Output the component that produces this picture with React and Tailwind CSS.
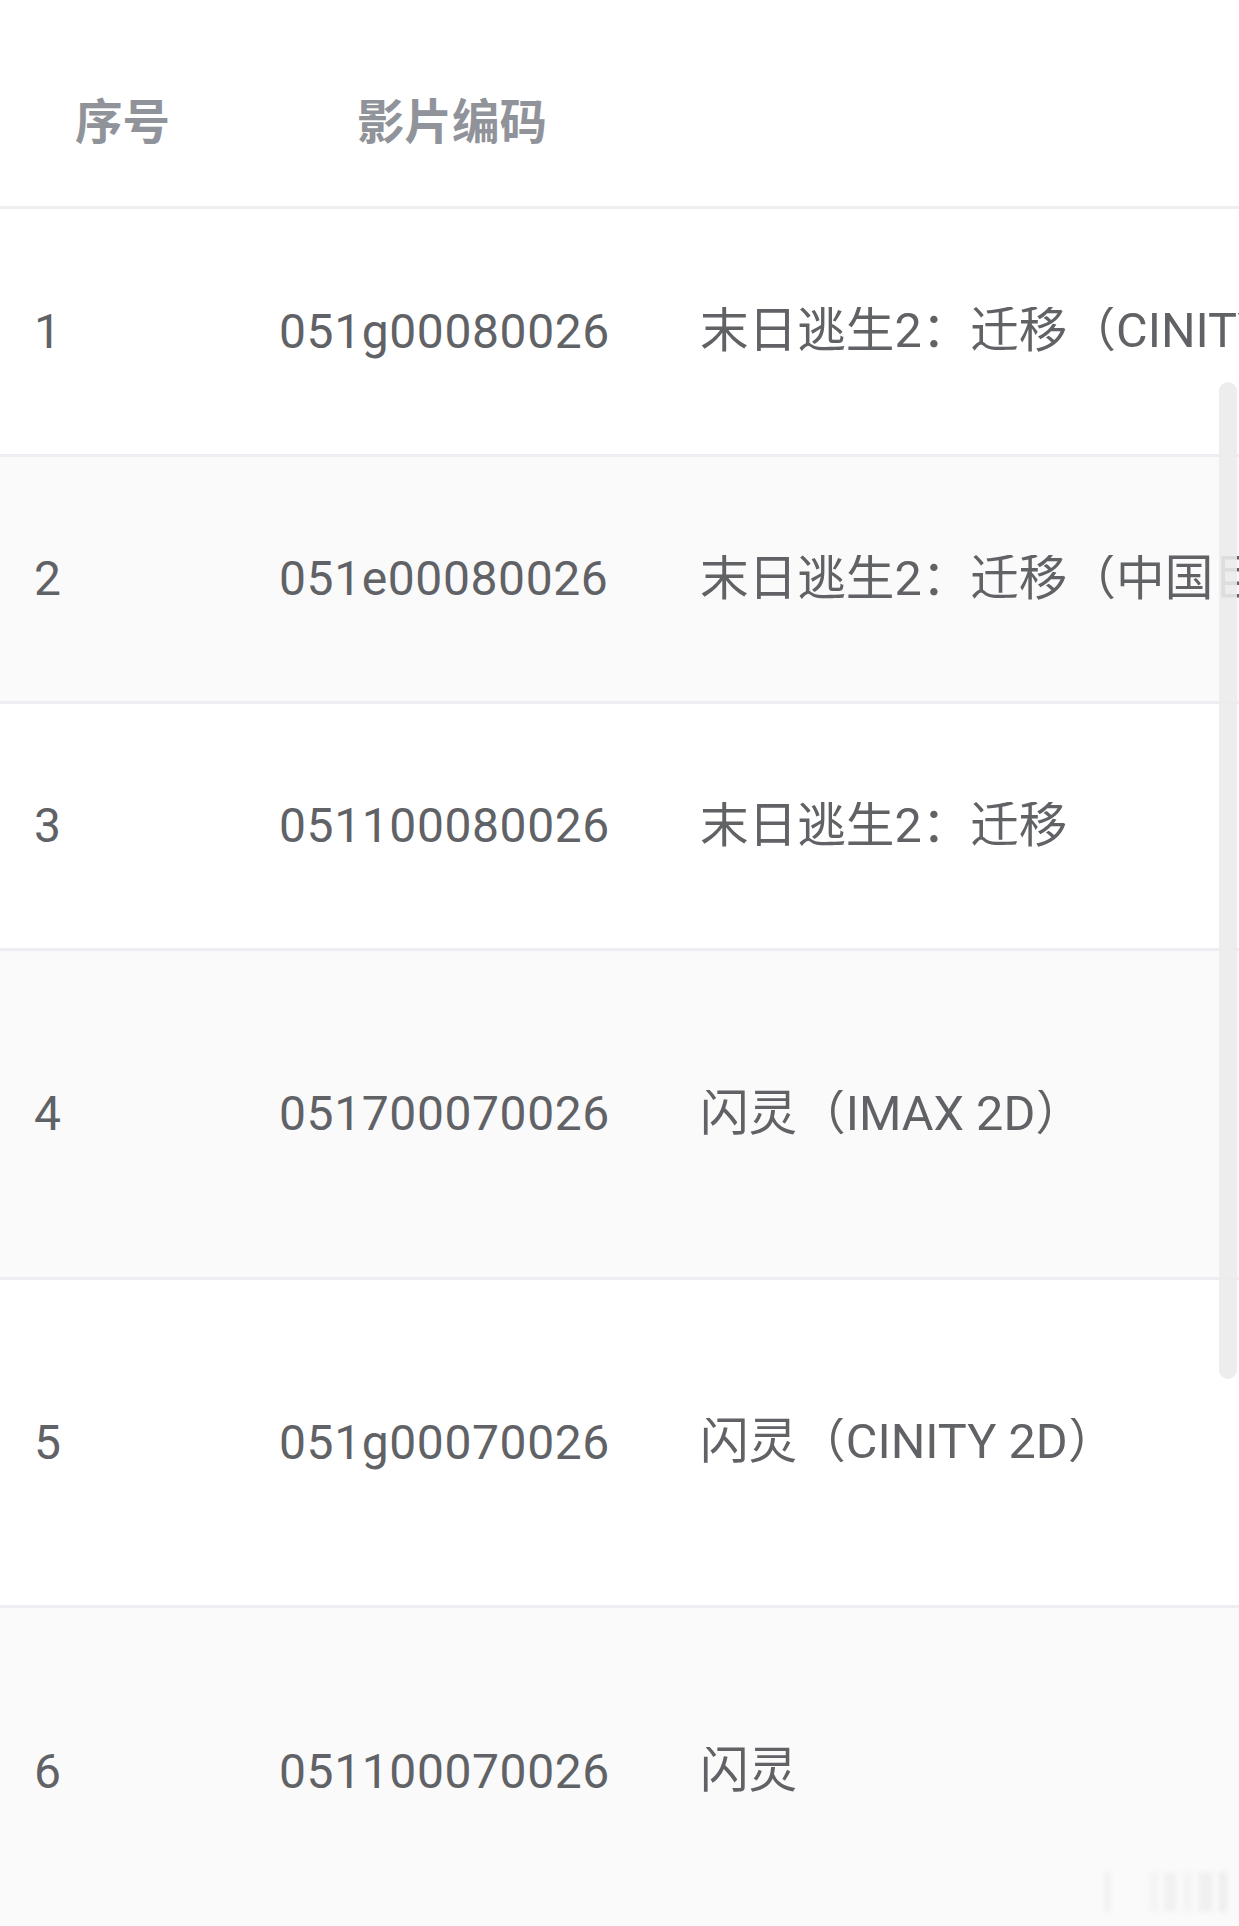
import React from "react";

const rows = [
  { no: "1", code: "051g00080026", name: "末日逃生2：迁移（CINITY 2D）", h: "h-[248px]" },
  { no: "2", code: "051e00080026", name: "末日逃生2：迁移（中国巨幕 2D）", h: "h-[247px]" },
  { no: "3", code: "051100080026", name: "末日逃生2：迁移", h: "h-[247px]" },
  { no: "4", code: "051700070026", name: "闪灵（IMAX 2D）", h: "h-[329px]" },
  { no: "5", code: "051g00070026", name: "闪灵（CINITY 2D）", h: "h-[328px]" },
  { no: "6", code: "051100070026", name: "闪灵", h: "h-[330px]" },
];

const font = { fontFamily: "Roboto, 'Noto Sans CJK SC', sans-serif" };

export default function App() {
  return (
    <div className="relative w-[1239px] h-[1926px] overflow-hidden bg-white" style={font}>
      {/* header */}
      <div className="flex h-[209px] border-b-[3px] border-[#efefef] text-[47.5px] font-bold leading-[47px] text-[#909399]">
        <div className="w-[245px] pl-[75px] pt-[100px]">序号</div>
        <div className="w-[420px] pl-[112px] pt-[100px]">影片编码</div>
        <div className="flex-1" />
      </div>

      {rows.map((r, i) => (
        <div
          key={r.no}
          className={`flex items-center ${r.h} border-b-[3px] border-[#ededf3] text-[#606266] ${
            i % 2 === 1 ? "bg-[#fafafa]" : "bg-white"
          }`}
        >
          <div className="w-[245px] shrink-0 pl-[34px] text-[48px] leading-none">{r.no}</div>
          <div className="w-[420px] shrink-0 pl-[34px] text-[48px] leading-none tracking-[0.6px]">{r.code}</div>
          <div className="flex-1 overflow-hidden whitespace-nowrap pl-[35px] text-[48.6px] leading-none">{r.name}</div>
        </div>
      ))}

      {/* scrollbar */}
      <div className="absolute right-[2px] top-[382px] h-[997px] w-[18px] rounded-full bg-[#ebebeb]/90" />

      {/* faint watermark */}
      <div className="absolute left-[1105px] top-[1872px] flex h-[40px] w-[122px] items-stretch gap-[6px] opacity-50 blur-[2px]">
        <div className="w-[5px] bg-[#e6e6e6]" />
        <div className="w-[30px]" />
        <div className="w-[8px] bg-[#eeeeee]" />
        <div className="w-[14px] bg-[#eaeaea]" />
        <div className="w-[10px] bg-[#eeeeee]" />
        <div className="w-[16px] bg-[#e8e8e8]" />
        <div className="w-[8px] bg-[#e2e2e2]" />
      </div>
    </div>
  );
}
